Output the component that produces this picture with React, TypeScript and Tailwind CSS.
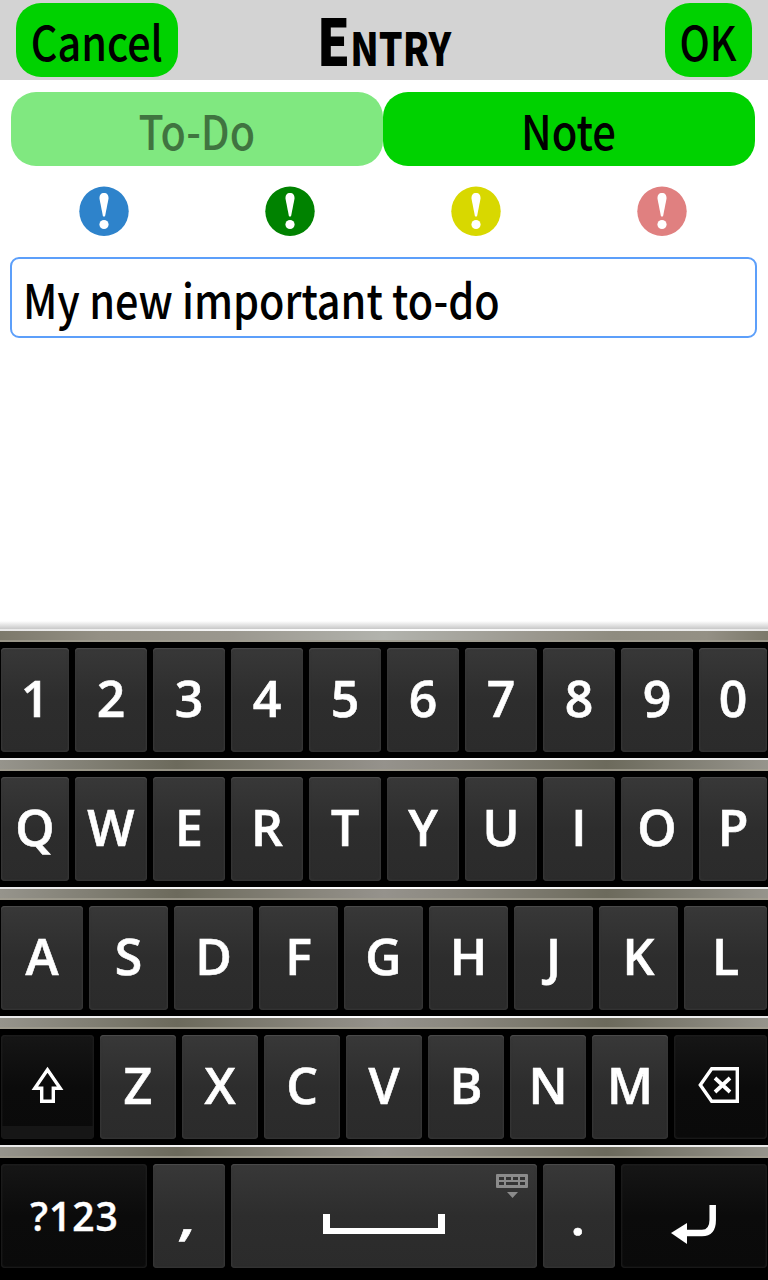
import React from "react";

type KeyDef = { label: string; width: string };

const W72 = "w-[72px]";
const W68 = "w-[68px]";
const W79 = "w-[79px]";
const W76 = "w-[76px]";

const topRow = (chars: string): KeyDef[] =>
  chars.split("").map((c, i) => ({ label: c, width: i === 0 || i === 9 ? W68 : W72 }));

const homeRow: KeyDef[] = "ASDFGHJKL".split("").map((c, i) => ({
  label: c,
  width: i === 0 ? "w-[82px]" : i === 8 ? "w-[83px]" : W79,
}));

function Key({ width, dark, children }: { width: string; dark?: boolean; children?: React.ReactNode }) {
  const tone = dark
    ? "bg-linear-to-b from-[#161616] via-[#0b0b0b] to-[#0a0a0a] shadow-[inset_0_0_2px_1px_#1f1f1f]"
    : "bg-linear-to-b from-[#383838] via-[#2d2d2d] to-[#2b2b2b] shadow-[inset_0_1px_1px_0_#4c4c4c,inset_0_0_2px_1px_#363636]";
  return (
    <div className={`relative flex h-[104px] shrink-0 justify-center overflow-hidden rounded-[4px] text-white ${width} ${tone}`}>
      {children}
    </div>
  );
}

function Letter({ className = "", children }: { className?: string; children: React.ReactNode }) {
  return (
    <span className={`block h-[104px] font-['Open_Sans',sans-serif] text-[50px] leading-[101px] font-semibold [-webkit-text-stroke:0.6px_white] ${className}`}>
      {children}
    </span>
  );
}

function Row({ first, children }: { first?: boolean; children: React.ReactNode }) {
  const bar = first
    ? "bg-[linear-gradient(90deg,#7c796b_0%,#949085_13%,#9a978e_30%,#b2b3ad_50%,#9a978e_70%,#8f8c80_80%,#949085_92%,#7c796b_100%)]"
    : "bg-[linear-gradient(90deg,#96948c_0%,#6c6a5c_23%,#8a877e_42%,#95928c_50%,#8a877e_60%,#6c6a5c_79%,#96948c_100%)]";
  return (
    <div className="h-[129px]">
      <div className="h-[2px] bg-linear-to-r from-[#e8e8e8] via-white to-[#e8e8e8]" />
      <div className={`h-[11px] border-b-2 border-[#a09c8e]/80 ${bar}`} />
      <div className="flex gap-1.5 px-px pt-1.5">{children}</div>
    </div>
  );
}

function Alert({ color }: { color: string }) {
  return (
    <div className="flex flex-1 justify-center">
      <svg width="50" height="50" viewBox="0 0 50 50">
        <circle cx="25" cy="25.300" r="24.7" fill={color} />
        <path d="M25 7C28 7 29.700 9 29.500 12.700L26.200 29.500Q25 32 23.800 29.500L20.500 12.700C20.300 9 22 7 25 7Z" fill="#fff" />
        <circle cx="25" cy="38.500" r="4.600" fill="#fff" />
      </svg>
    </div>
  );
}

const ui = "font-['Noto_Sans_CJK_SC',sans-serif] font-medium text-[48px] whitespace-nowrap";

export default function App() {
  return (
    <div className="flex h-[1280px] w-[768px] flex-col overflow-hidden bg-white text-black">
      <header className="flex h-20 items-start justify-between bg-[#d3d3d3] px-4">
        <button className="mt-[3px] flex h-[74px] w-[162px] items-center justify-center rounded-[25px] bg-[#00d200]">
          <span className={`${ui} block scale-x-[0.86] leading-[74px]`}>Cancel</span>
        </button>
        <h1 className="flex h-20 w-[180px] justify-center">
          <span className="block scale-x-[0.83] font-['Noto_Sans_CJK_SC',sans-serif] text-[64px] leading-[76px] font-black whitespace-nowrap [font-variant:small-caps]">
            Entry
          </span>
        </h1>
        <div className="flex w-[162px] justify-end">
          <button className="mt-[3px] flex h-[74px] w-[87px] items-center justify-center rounded-[25px] bg-[#00d200]">
            <span className={`${ui} block scale-x-[0.84] leading-[74px]`}>OK</span>
          </button>
        </div>
      </header>

      <div className="flex pt-3 pr-[13px] pl-[11px]">
        <button className="flex h-[74px] w-[372px] items-center justify-center rounded-[25px] bg-[#80e880]">
          <span className={`${ui} block scale-x-[0.86] leading-[74px] text-black/50`}>To-Do</span>
        </button>
        <button className="flex h-[74px] w-[372px] items-center justify-center rounded-[25px] bg-[#00d200]">
          <span className={`${ui} block scale-x-[0.87] leading-[74px]`}>Note</span>
        </button>
      </div>

      <div className="flex pt-5 pr-[13px] pl-[11px]">
        <Alert color="#2e83cb" />
        <Alert color="#008200" />
        <Alert color="#d8d800" />
        <Alert color="#e08080" />
      </div>

      <div className="mt-[21px] ml-[10px] flex h-[81px] w-[747px] rounded-[9px] border-2 border-[#5c9ffa] pl-[11px]">
        <span className={`${ui} block origin-left scale-x-[0.862] leading-[79px]`}>My new important to-do</span>
      </div>

      <div className="mt-auto h-2 bg-linear-to-b from-white to-[#c8c8c8]" />
      <div className="h-[651px] bg-black">
        <Row first>
          {topRow("1234567890").map((k) => (
            <Key key={k.label} width={k.width}><Letter>{k.label}</Letter></Key>
          ))}
        </Row>
        <Row>
          {topRow("QWERTYUIOP").map((k) => (
            <Key key={k.label} width={k.width}><Letter>{k.label}</Letter></Key>
          ))}
        </Row>
        <Row>
          {homeRow.map((k) => (
            <Key key={k.label} width={k.width}><Letter>{k.label}</Letter></Key>
          ))}
        </Row>
        <Row>
          <Key width="w-[93px]" dark>
            <svg width="93" height="104" viewBox="0 0 93 104" fill="none">
              <rect x="1" y="91" width="91" height="12" fill="#161616" />
              <path d="M46.500 34.800 33.800 53.200H40.700V66.300H52.300V53.200H59.200Z" stroke="#fff" strokeWidth="3.400" />
            </svg>
          </Key>
          {"ZXCVBNM".split("").map((c) => (
            <Key key={c} width={W76}><Letter>{c}</Letter></Key>
          ))}
          <Key width="w-[93px]" dark>
            <svg width="93" height="104" viewBox="0 0 93 104" fill="none" stroke="#fff" strokeWidth="3.400">
              <path d="M26.300 50 37.700 33.700H63.300V66.300H37.700Z" />
              <path d="m41 43 15 14m0-14L41 57" strokeWidth="3.800" />
            </svg>
          </Key>
        </Row>
        <Row>
          <Key width="w-[146px]" dark>
            <span className="block pl-px font-['Open_Sans',sans-serif] text-[39px] leading-[103px] font-semibold tracking-[1px] [-webkit-text-stroke:0.4px_white]">?123</span>
          </Key>
          <Key width={W72}><Letter className="-skew-x-6 scale-x-125 pt-0.5 font-bold">,</Letter></Key>
          <Key width="w-[306px]">
            <svg width="306" height="104" viewBox="0 0 306 104" fill="none">
              <path d="M92 50H99V64H207V50H214V70H92Z" fill="#fff" />
              <rect x="265" y="10" width="32" height="14" rx="1" fill="#8b8b8b" />
              <path d="M268 14.500h5m2 0h5m2 0h5m2 0h5M268 19.500h5m2 0h12m2 0h5" stroke="#343434" strokeWidth="3" />
              <path d="M276 28h11l-5.500 6Z" fill="#8b8b8b" />
            </svg>
          </Key>
          <Key width={W72}><Letter className="scale-x-110 pr-0.5 pt-0.5">.</Letter></Key>
          <Key width="w-[146px]" dark>
            <svg width="146" height="104" viewBox="0 0 146 104" fill="none">
              <path d="M91.700 41V56Q91.700 69 81 69H64" stroke="#fff" strokeWidth="6.500" />
              <path d="M50 69 66 59V80Z" fill="#fff" />
            </svg>
          </Key>
        </Row>
      </div>
    </div>
  );
}
